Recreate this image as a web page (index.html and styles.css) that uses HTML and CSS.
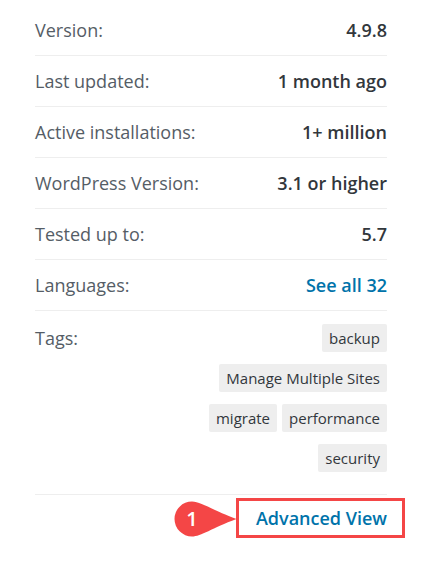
FILE: index.html
```html
<!DOCTYPE html>
<html>
<head>
<meta charset="utf-8">
<link rel="stylesheet" href="styles.css">
</head>
<body>
<div class="widget">
  <ul class="meta">
    <li class="row"><span class="label">Version:</span><strong class="value">4.9.8</strong></li>
    <li class="row"><span class="label">Last updated:</span><strong class="value">1 month ago</strong></li>
    <li class="row"><span class="label">Active installations:</span><strong class="value">1+ million</strong></li>
    <li class="row"><span class="label">WordPress Version:</span><strong class="value">3.1 or higher</strong></li>
    <li class="row"><span class="label">Tested up to:</span><strong class="value">5.7</strong></li>
    <li class="row"><span class="label">Languages:</span><a class="value link" href="#">See all 32</a></li>
    <li class="row tags-row"><span class="label">Tags:</span>
      <div class="tags">
        <a class="tag" href="#">backup</a>
        <a class="tag" href="#">Manage Multiple Sites</a>
        <a class="tag" href="#">migrate</a>
        <a class="tag" href="#">performance</a>
        <a class="tag" href="#">security</a>
      </div>
    </li>
  </ul>
  <div class="advanced">
    <a class="advanced-link" href="#">Advanced View
      <span class="badge">
        <svg width="63" height="36" viewBox="0 0 63 36"><path d="M18 0.5 C27 0.5 38 9 62.5 18 C38 27 27 35.5 18 35.5 A17.5 17.5 0 0 1 18 0.5 Z" fill="#f44646"/></svg>
        <span class="badge-num">1</span>
      </span>
    </a>
  </div>
</div>
</body>
</html>
```
FILE: styles.css
```css
html, body {
  margin: 0;
  padding: 0;
  background: #fff;
}
body {
  font-family: "Open Sans", "Noto Sans", sans-serif;
  font-size: 18px;
  color: #32373c;
}
.widget {
  width: 352px;
  margin-left: 35px;
  padding-top: 5px;
}
.meta {
  list-style: none;
  margin: 0;
  padding: 0;
}
.row {
  display: flex;
  justify-content: space-between;
  align-items: center;
  height: 50px;
  border-bottom: 1px solid #eeeeee;
  line-height: 26px;
}
.label {
  color: #555d66;
}
.value {
  font-weight: 600;
  color: #32373c;
}
.link {
  color: #0073aa;
  text-decoration: none;
}
.tags-row {
  height: auto;
  align-items: flex-start;
  padding: 13px 0 10px;
}
.tags-row .label {
  margin-top: 1px;
}
.tags {
  display: flex;
  flex-wrap: wrap;
  justify-content: flex-end;
  gap: 0 5px;
  max-width: 205px;
}
.tag {
  display: block;
  background: #eeeeee;
  color: #32373c;
  text-decoration: none;
  font-size: 15px;
  line-height: 20px;
  padding: 4px 7px 4px 7px;
  border-radius: 2px;
  margin-bottom: 12px;
}
.advanced {
  display: flex;
  justify-content: flex-end;
  margin-top: 3px;
}
.advanced-link {
  position: relative;
  display: block;
  margin-right: -18px;
  padding: 5px 15px 5px 17px;
  border: 3px solid #f44646;
  color: #0073aa;
  font-weight: 600;
  line-height: 24px;
  text-decoration: none;
}
.badge {
  position: absolute;
  right: 100%;
  margin-right: 2px;
  top: 0;
  width: 63px;
  height: 36px;
}
.badge svg {
  display: block;
}
.badge-num {
  position: absolute;
  left: 0;
  top: 0;
  width: 36px;
  height: 36px;
  line-height: 36px;
  text-align: center;
  color: #fff;
  font-size: 20px;
  font-weight: 600;
}
```
